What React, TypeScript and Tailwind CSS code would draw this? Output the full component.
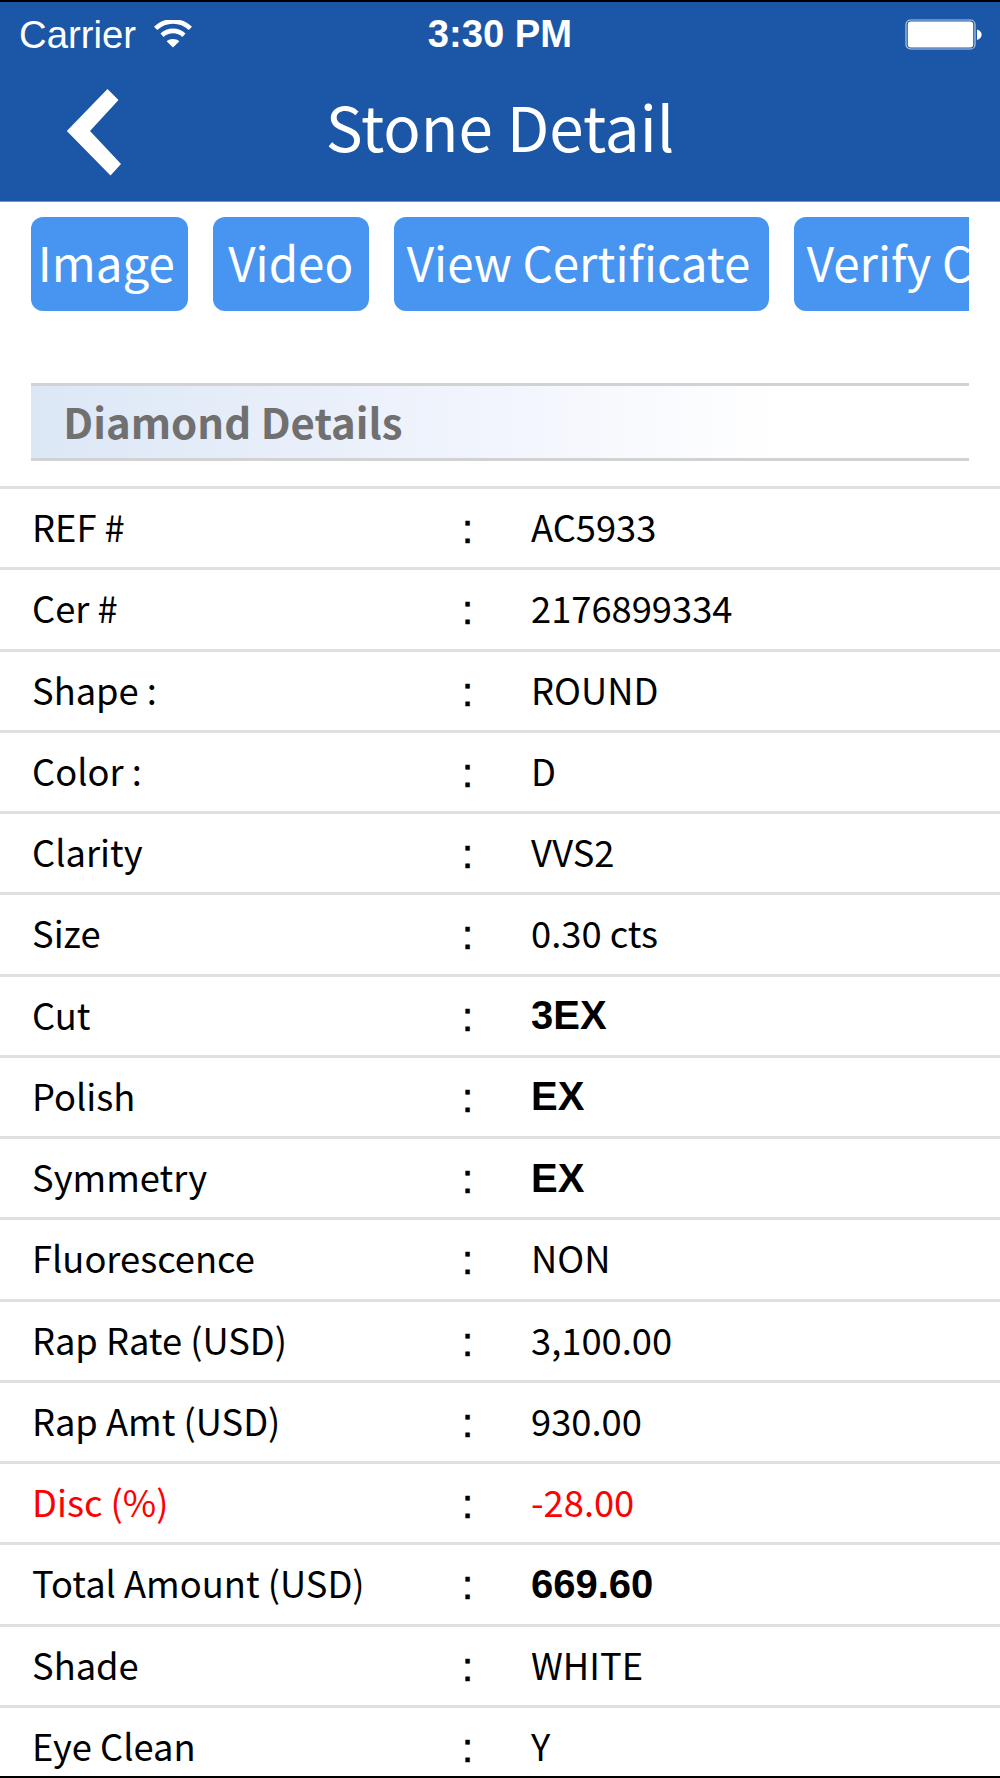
import { clsx } from "clsx";

interface Detail {
  label: string;
  value: string;
  bold?: boolean;
  red?: boolean;
}

const details: Detail[] = [
  { label: "REF #", value: "AC5933" },
  { label: "Cer #", value: "2176899334" },
  { label: "Shape :", value: "ROUND" },
  { label: "Color :", value: "D" },
  { label: "Clarity", value: "VVS2" },
  { label: "Size", value: "0.30 cts" },
  { label: "Cut", value: "3EX", bold: true },
  { label: "Polish", value: "EX", bold: true },
  { label: "Symmetry", value: "EX", bold: true },
  { label: "Fluorescence", value: "NON" },
  { label: "Rap Rate (USD)", value: "3,100.00" },
  { label: "Rap Amt (USD)", value: "930.00" },
  { label: "Disc (%)", value: "-28.00", red: true },
  { label: "Total Amount (USD)", value: "669.60", bold: true },
  { label: "Shade", value: "WHITE" },
  { label: "Eye Clean", value: "Y" },
];

const actions = [
  { label: "Image", className: "w-[156.5px] pl-[6.5px]" },
  { label: "Video", className: "w-[156.5px] pl-[15.5px]" },
  { label: "View Certificate", className: "w-[375px] pl-[12.5px]" },
  { label: "Verify Certificate", className: "w-[400px] pl-[12.5px]" },
];

function WifiIcon() {
  return (
    <svg className="ml-[18px] h-[28px] w-[38px]" viewBox="0 0 38 28" fill="none" stroke="#fff">
      <path d="M1.6 8.4C11.5-1 26.5-1 36.4 8.4" strokeWidth="4.6" />
      <path d="M8 15.2C14.4 9.4 23.6 9.4 30 15.2" strokeWidth="4.6" />
      <path d="M12.6 21.3C16 18.1 22 18.1 25.4 21.3L19 27.6Z" fill="#fff" stroke="none" />
    </svg>
  );
}

function BatteryIcon() {
  return (
    <svg className="h-[31px] w-[78px]" viewBox="0 0 78 31">
      <rect x="1" y="1" width="69" height="29" rx="4.5" fill="none" stroke="#b4cae6" strokeWidth="1.2" />
      <rect x="2.8" y="2.6" width="65.4" height="25.8" rx="3" fill="#fff" />
      <path d="M72 10.5C75.400 11.500 76.600 13.500 76.600 15.700S75.400 20 72 21Z" fill="#fff" />
    </svg>
  );
}

function Header() {
  return (
    <header className="h-[202px] shrink-0 border-t-2 border-b border-t-black border-b-[#7d8fb8] bg-[#1b57a6] text-white">
      <div className="grid h-[64px] grid-cols-3 items-center font-['Liberation_Sans']">
        <div className="flex items-center pl-[19px]">
          <span className="pt-[2px] text-[38.3px] leading-none">Carrier</span>
          <WifiIcon />
        </div>
        <span className="pt-[1px] text-center text-[38.2px] leading-none font-bold">3:30 PM</span>
        <div className="flex justify-end pr-[17px]">
          <BatteryIcon />
        </div>
      </div>
      <div className="grid h-[130px] grid-cols-[200px_1fr_200px]">
        <svg className="mt-[23px] ml-[66px] h-[88px] w-[56px]" viewBox="0 0 56 88">
          <path d="M41.500 0L52.500 11L24 42L55 75L44.500 86.500L.8 42Z" fill="#fff" />
        </svg>
        <h1 className="mt-[15px] text-center text-[61.9px] leading-[88px]">Stone Detail</h1>
      </div>
    </header>
  );
}

function DetailRow({ label, value, bold, red }: Detail) {
  return (
    <div className="grid h-[81.25px] shrink-0 grid-cols-[430px_69px_1fr] border-t-[3px] border-[#e0e0e0] pl-8 text-[36.3px] leading-[75px]">
      <span className={clsx("whitespace-nowrap", red && "text-[#ff0000]")}>{label}</span>
      <span className="pt-[3px] font-['Liberation_Sans'] text-[40px] [-webkit-text-stroke:0.6px_black]">:</span>
      <span
        className={clsx(
          bold && "pt-[1.5px] font-['Liberation_Sans'] text-[40px] font-bold",
          red && "text-[#ff0000]",
        )}
      >
        {value}
      </span>
    </div>
  );
}

export default function App() {
  return (
    <div className="flex h-[1778px] w-[1000px] flex-col overflow-hidden border-b-2 border-black bg-white font-['Noto_Sans_CJK_SC',sans-serif] text-black">
      <Header />
      <nav className="mx-[31.3px] mt-[15px] flex h-[94px] shrink-0 gap-[25px] overflow-hidden text-white">
        {actions.map((a) => (
          <button
            key={a.label}
            className={clsx(
              "flex shrink-0 items-start rounded-[12px] bg-[#4795f0] text-[47.5px] leading-[89px] whitespace-nowrap",
              a.className,
            )}
          >
            {a.label}
          </button>
        ))}
      </nav>
      <h2 className="mx-[31.3px] mt-[72px] h-[78px] shrink-0 border-y-[3px] border-[#d2d2d2] bg-linear-to-r from-[#dce7f6] via-[#f2f5fd] via-50% to-white to-80% pl-[32px] text-[41.9px] leading-[69px] font-bold text-[#707070]">
        Diamond Details
      </h2>
      <main className="mt-[25px] flex flex-col">
        {details.map((d) => (
          <DetailRow key={d.label} {...d} />
        ))}
      </main>
    </div>
  );
}
